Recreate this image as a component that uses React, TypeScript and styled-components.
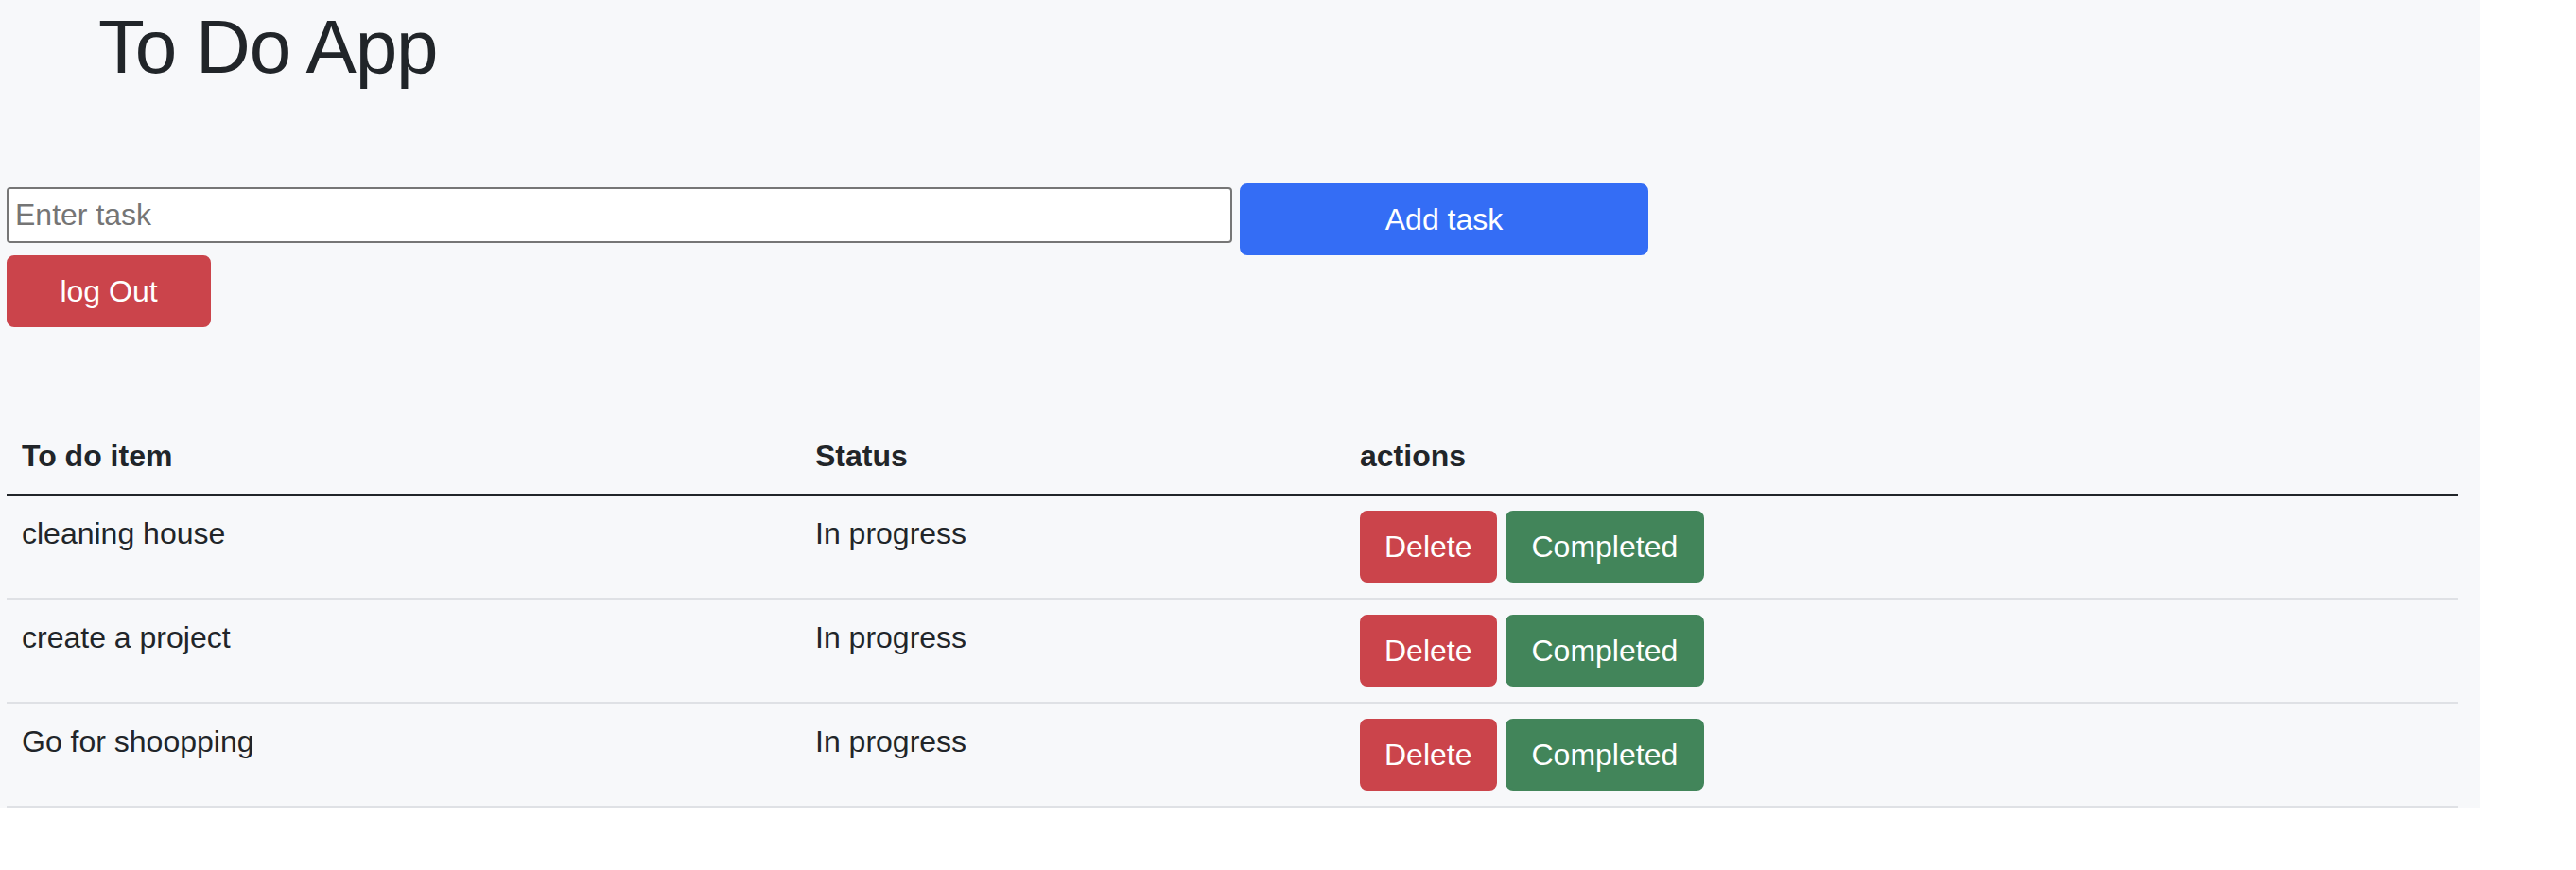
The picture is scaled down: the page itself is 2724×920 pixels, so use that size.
import React from "react";
import styled, { createGlobalStyle } from "styled-components";

const GlobalStyle = createGlobalStyle`
  html, body {
    margin: 0;
    padding: 0;
    background: #ffffff;
  }
  body {
    font-family: "Liberation Sans", Arial, sans-serif;
    color: #212529;
  }
  * { box-sizing: border-box; }
`;

const Panel = styled.div`
  width: 2623px;
  background: #f7f8fa;
  padding: 4px 24px 0 7px;
  display: flex;
  flex-direction: column;
`;

const Title = styled.h1`
  margin: -2px 0 96px 97px;
  font-size: 80px;
  line-height: 96px;
  font-weight: 400;
  letter-spacing: -1.2px;
  color: #212529;
`;

const InputRow = styled.div`
  display: flex;
  align-items: flex-start;
  gap: 8px;
`;

const TaskInput = styled.input`
  width: 1296px;
  height: 59px;
  margin-top: 4px;
  padding: 0 7px;
  border: 2px solid #767676;
  border-radius: 4px;
  background: #ffffff;
  font-family: "Liberation Sans", Arial, sans-serif;
  font-size: 32px;
  color: #212529;
  outline: none;
  &::placeholder {
    color: #757575;
  }
`;

type Tone = "primary" | "danger" | "success";

const toneColor: Record<Tone, string> = {
  primary: "#346df5",
  danger: "#cb444b",
  success: "#42855a",
};

const Button = styled.button<{ $tone: Tone; $width?: number; $padX?: number }>`
  display: inline-block;
  ${(p) => (p.$width ? `width: ${p.$width}px;` : "")}
  height: 76px;
  padding: 12px ${(p) => p.$padX ?? 24}px;
  border: 2px solid ${(p) => toneColor[p.$tone]};
  border-radius: 8px;
  font-family: "Liberation Sans", Arial, sans-serif;
  font-size: 32px;
  line-height: 48px;
  font-weight: 400;
  color: #ffffff;
  text-align: center;
  white-space: nowrap;
  cursor: pointer;
  background: ${(p) => toneColor[p.$tone]};
`;

const LogoutRow = styled.div`
  display: flex;
  margin-bottom: 96px;
`;

const Table = styled.table`
  width: 2592px;
  table-layout: fixed;
  border-collapse: separate;
  border-spacing: 0;
  font-size: 32px;
  line-height: 48px;
  color: #212529;
`;

const HeadCell = styled.th<{ $width?: number }>`
  ${(p) => (p.$width ? `width: ${p.$width}px;` : "")}
  padding: 16px;
  text-align: left;
  font-weight: 700;
  vertical-align: bottom;
  border-bottom: 2px solid #212529;
`;

const Cell = styled.td`
  padding: 16px;
  vertical-align: top;
  border-bottom: 2px solid #dfe1e5;
`;

const Actions = styled.div`
  display: flex;
  gap: 9px;
`;

const tasks = ["cleaning house", "create a project", "Go for shoopping"];

export default function App() {
  return (
    <>
      <GlobalStyle />
      <Panel>
        <Title>To Do App</Title>
        <InputRow>
          <TaskInput type="text" placeholder="Enter task" />
          <Button $tone="primary" $width={432}>
            Add task
          </Button>
        </InputRow>
        <LogoutRow>
          <Button $tone="danger" $width={216}>
            log Out
          </Button>
        </LogoutRow>
        <Table>
          <thead>
            <tr>
              <HeadCell $width={839}>To do item</HeadCell>
              <HeadCell $width={576}>Status</HeadCell>
              <HeadCell>actions</HeadCell>
            </tr>
          </thead>
          <tbody>
            {tasks.map((t) => (
              <tr key={t}>
                <Cell>{t}</Cell>
                <Cell>In progress</Cell>
                <Cell>
                  <Actions>
                    <Button $tone="danger">Delete</Button>
                    <Button $tone="success" $padX={26}>
                      Completed
                    </Button>
                  </Actions>
                </Cell>
              </tr>
            ))}
          </tbody>
        </Table>
      </Panel>
    </>
  );
}
